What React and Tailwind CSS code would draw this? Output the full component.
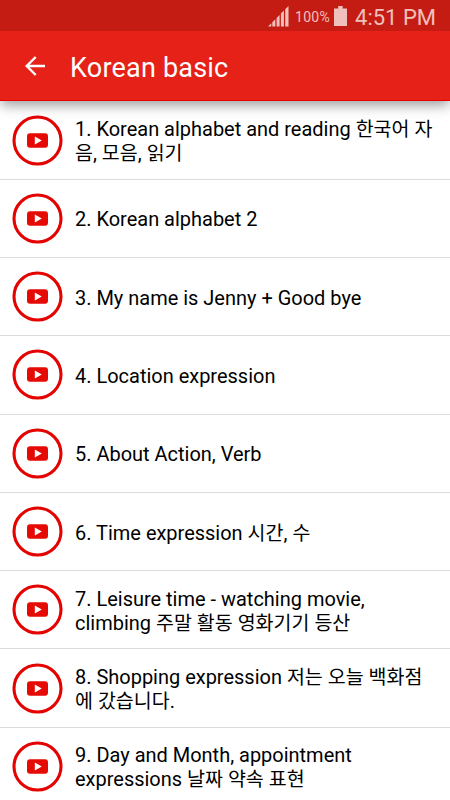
import React from 'react';

const lessons = [
    ['1. Korean alphabet and reading 한국어 자', '음, 모음, 읽기'],
    ['2. Korean alphabet 2'],
    ['3. My name is Jenny + Good bye'],
    ['4. Location expression'],
    ['5. About Action, Verb'],
    ['6. Time expression 시간, 수'],
    ['7. Leisure time - watching movie,', 'climbing 주말 활동 영화기기 등산'],
    ['8. Shopping expression 저는 오늘 백화점', '에 갔습니다.'],
    ['9. Day and Month, appointment', 'expressions 날짜 약속 표현'],
];

const StatusBar = () => (
    <div className="z-20 flex h-[31px] items-center justify-end bg-[#c41c13] pt-[1px] pr-[14px] text-[#f0c0bd]">
        <svg width="21" height="21" viewBox="0 0 21 21" fill="currentColor">
            <path d="M0 20.500l3.300-3.300v3.300zM4.300 16.200l3-3v7.300h-3zM8.600 11.900l3-3v11.600h-3zM12.900 7.600l3-3v15.900h-3zM17.200 3.300l3.300-3.300v20.500h-3.300z" />
        </svg>
        <span className="mt-[2px] ml-[6px] text-[14px] leading-none tracking-[0.3px]">100%</span>
        <svg className="ml-[4px]" width="13" height="20" viewBox="0 0 13 20" fill="currentColor">
            <path d="M4.200 0h4.500v2.500H13V20H0V2.500h4.200z" />
        </svg>
        <span className="mt-[3px] ml-[8px] text-[22px] leading-none">4:51 PM</span>
    </div>
);

const Header = () => (
    <header className="z-10 flex h-[70px] shrink-0 items-center border-b border-[#e60000] bg-[#e62117] text-white shadow-[0_5px_12px_-1px_rgba(0,0,0,0.4)]">
        <svg className="mt-px ml-[25px]" width="20" height="20" viewBox="0 0 20 20" fill="none" stroke="currentColor" strokeWidth="2.4">
            <path d="M20 10H2M10.700 1L1.700 10l9 9" />
        </svg>
        <h1 className="mt-[5px] ml-[25px] text-[27px] leading-none tracking-[0.2px]">Korean basic</h1>
    </header>
);

const PlayBadge = () => (
    <svg className="ml-[12px] shrink-0" width="51" height="51" viewBox="0 0 51 51">
        <circle cx="25.500" cy="25.500" r="23.500" fill="white" stroke="#e30300" strokeWidth="3.100" />
        <rect x="15" y="18.200" width="21" height="14.500" rx="3" fill="#e60a05" />
        <path d="M22.800 21.500v8l7-4z" fill="white" />
    </svg>
);

// Hangul is set a little smaller than the Latin text around it
const LessonLine = ({ text }) => (
    <p>
        {text.split(/([가-힣]+)/).map((part, i) =>
            i % 2 ? <span key={i} className="text-[19.5px] leading-none">{part}</span> : part
        )}
    </p>
);

const LessonRow = ({ lines }) => (
    <li className="flex h-[78.3px] shrink-0 items-center border-b border-[#dcdcdc]">
        <PlayBadge />
        <div className="mt-[2px] ml-[12px] text-[19.98px] leading-[24px] whitespace-nowrap text-black">
            {lines.map((line) => (
                <LessonLine key={line} text={line} />
            ))}
        </div>
    </li>
);

const App = () => {
    return (
        <div className="flex h-[800px] w-[450px] flex-col overflow-hidden bg-white font-['Roboto','Noto_Sans_CJK_KR',sans-serif]">
            <StatusBar />
            <Header />
            <ul className="flex min-h-0 flex-1 flex-col overflow-hidden pt-[0.4px]">
                {lessons.map((lines) => (
                    <LessonRow key={lines[0]} lines={lines} />
                ))}
            </ul>
        </div>
    );
};

export default App;
